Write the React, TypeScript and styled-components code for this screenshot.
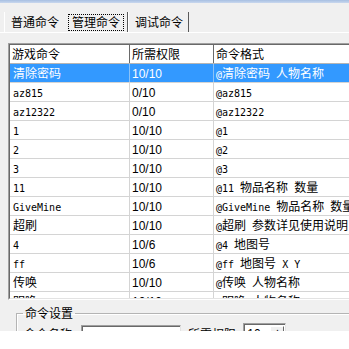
import React from 'react'
import styled, { createGlobalStyle } from 'styled-components'

const GlobalStyle = createGlobalStyle`
    html, body {
        margin: 0;
        padding: 0;
        background: #ffffff;
    }
    * {
        box-sizing: border-box;
    }
`

const CJK = '"Noto Sans CJK SC", "Noto Sans", sans-serif'
const MONO = '"DejaVu Sans Mono", "Liberation Mono", "Noto Sans CJK SC", monospace'
const SANS = '"Liberation Sans", "Noto Sans CJK SC", sans-serif'

const rows = [
    ['清除密码', '10/10', '@清除密码 人物名称'],
    ['az815', '0/10', '@az815'],
    ['az12322', '0/10', '@az12322'],
    ['1', '10/10', '@1'],
    ['2', '10/10', '@2'],
    ['3', '10/10', '@3'],
    ['11', '10/10', '@11 物品名称 数量'],
    ['GiveMine', '10/10', '@GiveMine 物品名称 数量'],
    ['超刷', '10/10', '@超刷 参数详见使用说明'],
    ['4', '10/6', '@4 地图号'],
    ['ff', '10/6', '@ff 地图号 X Y'],
    ['传唤', '10/10', '@传唤 人物名称'],
    ['明唤', '10/10', '@明唤 人物名称'],
]

// split a string into CJK and latin runs so each gets its own font
function Mixed({ text }: { text: string }) {
    const parts = text.split(/([\u3400-\u9fff]+)/).filter(Boolean)
    return (
        <>
            {parts.map((p, i) =>
                /[\u3400-\u9fff]/.test(p) ? <Han key={i}>{p}</Han> : <Latin key={i}>{p}</Latin>
            )}
        </>
    )
}

export default function App() {
    return (
        <>
            <GlobalStyle />
            <Screen>
                <TitleStrip />
                <TabBar>
                    <Tab>普通命令</Tab>
                    <Tab $active $divider>
                        <Focus>管理命令</Focus>
                    </Tab>
                    <Tab $divider>调试命令</Tab>
                </TabBar>

                <TableFrame>
                    <TableInner>
                        <HeaderRow>
                            <HeaderCell>游戏命令</HeaderCell>
                            <HeaderCell>所需权限</HeaderCell>
                            <HeaderCell>命令格式</HeaderCell>
                        </HeaderRow>
                        {rows.map((r, i) => (
                            <Row key={i} $selected={i === 0}>
                                <Cell $pad={3} $selected={i === 0}>
                                    <Mixed text={r[0]} />
                                </Cell>
                                <Cell $pad={2} $selected={i === 0}>
                                    <Level>{r[1]}</Level>
                                </Cell>
                                <Cell $pad={2} $selected={i === 0}>
                                    <Mixed text={r[2]} />
                                </Cell>
                            </Row>
                        ))}
                    </TableInner>
                </TableFrame>

                <GroupBox>
                    <Legend>命令设置</Legend>
                    <FormRow>
                        <FieldLabel>命令名称</FieldLabel>
                        <TextBox />
                        <FieldLabel $gap={7}>所需权限:</FieldLabel>
                        <Spin>
                            <SpinValue>10</SpinValue>
                            <SpinButton>▲</SpinButton>
                        </Spin>
                    </FormRow>
                </GroupBox>
            </Screen>
        </>
    )
}

const Screen = styled.div`
    width: 100%;
    height: 331px;
    background: #f0f0f0;
    overflow: hidden;
    display: flex;
    flex-direction: column;
    color: #000;
`

const TitleStrip = styled.div`
    height: 3px;
    flex: none;
    background: linear-gradient(to bottom, #a7bfe2, #c9d8ee);
`

const TabBar = styled.div`
    display: flex;
    height: 21px;
    flex: none;
    margin-top: 9px;
    padding-left: 4px;
    border-bottom: 1px solid #ffffff;
`

const Tab = styled.div<{ $active?: boolean; $divider?: boolean }>`
    display: flex;
    align-items: center;
    height: 20px;
    padding: ${(p) => (p.$active ? '0 3px 0 2px' : '0 5px 0 6px')};
    border-left: 1px solid ${(p) => (p.$active ? 'transparent' : '#ffffff')};
    border-right: 1px solid ${(p) => (p.$divider ? '#5a5a5a' : 'transparent')};
    font-family: ${CJK};
    font-size: 12px;
    line-height: 14px;
    white-space: nowrap;
`

const Focus = styled.span`
    display: flex;
    align-items: center;
    height: 17px;
    padding: 0 3px;
    border: 1px dotted #000;
`

const TableFrame = styled.div`
    flex: none;
    width: 420px;
    height: 257px;
    margin: 10px 0 0 8px;
    border-top: 1px solid #a0a0a0;
    border-left: 1px solid #a0a0a0;
    border-bottom: 1px solid #ffffff;
`

const TableInner = styled.div`
    height: 100%;
    background: #ffffff;
    border-top: 1px solid #696969;
    border-left: 1px solid #696969;
    border-bottom: 1px solid #e3e3e3;
    overflow: hidden;
`

const HeaderRow = styled.div`
    display: grid;
    grid-template-columns: 120px 84px 1fr;
    height: 19px;
    border-bottom: 1px solid #b5b5b5;
    background: #ffffff;
`

const HeaderCell = styled.div`
    padding-left: 2px;
    border-right: 1px solid #6a6a6a;
    font-family: ${CJK};
    font-size: 12px;
    line-height: 18px;
    white-space: nowrap;
`

const Row = styled.div<{ $selected?: boolean }>`
    display: grid;
    grid-template-columns: 120px 84px 1fr;
    height: 19px;
    border-bottom: 1px solid #d4d4d4;
    background: ${(p) => (p.$selected ? '#3399ff' : '#ffffff')};
    color: ${(p) => (p.$selected ? '#ffffff' : '#000000')};
`

const Cell = styled.div<{ $pad: number; $selected?: boolean }>`
    padding-left: ${(p) => p.$pad}px;
    border-right: 1px solid ${(p) => (p.$selected ? '#8cc2f7' : '#d4d4d4')};
    line-height: 18px;
    white-space: nowrap;
    overflow: hidden;
`

const Han = styled.span`
    font-family: ${CJK};
    font-size: 12px;
`

const Latin = styled.span`
    font-family: ${MONO};
    font-size: 10px;
    white-space: pre;
`

const Level = styled.span`
    font-family: ${SANS};
    font-size: 12px;
`

const GroupBox = styled.fieldset`
    flex: none;
    width: 420px;
    margin: 6px 0 0 16px;
    padding: 0 6px 10px;
    border: 1px solid #b4b4b4;
    box-shadow: inset 1px 1px 0 #ffffff;
`

const Legend = styled.legend`
    padding: 0 2px;
    margin-left: 0;
    font-family: ${CJK};
    font-size: 12px;
    line-height: 14px;
`

const FormRow = styled.div`
    display: flex;
    align-items: flex-start;
    padding-top: 3px;
`

const FieldLabel = styled.span<{ $gap?: number }>`
    margin-left: ${(p) => p.$gap ?? 1}px;
    margin-top: 3px;
    font-family: ${CJK};
    font-size: 12px;
    line-height: 16px;
    white-space: nowrap;
`

const TextBox = styled.div`
    width: 100px;
    height: 21px;
    margin: 2px 0 0 9px;
    background: #ffffff;
    border-top: 1px solid #a0a0a0;
    border-left: 1px solid #a0a0a0;
    border-right: 1px solid #e3e3e3;
    border-bottom: 1px solid #e3e3e3;
    box-shadow: inset 1px 1px 0 #696969;
`

const Spin = styled.div`
    display: flex;
    width: 43px;
    height: 21px;
    margin-left: 4px;
    background: #ffffff;
    border-top: 1px solid #a0a0a0;
    border-left: 1px solid #a0a0a0;
    border-right: 1px solid #e3e3e3;
    border-bottom: 1px solid #e3e3e3;
    box-shadow: inset 1px 1px 0 #696969;
`

const SpinValue = styled.span`
    flex: 1;
    padding: 2px 0 0 3px;
    font-family: ${SANS};
    font-size: 12px;
    line-height: 16px;
`

const SpinButton = styled.span`
    width: 14px;
    margin: 2px 1px 0 0;
    height: 10px;
    display: flex;
    align-items: center;
    justify-content: center;
    background: #f0f0f0;
    border: 1px solid;
    border-color: #ffffff #696969 #696969 #ffffff;
    font-size: 6px;
    line-height: 1;
`
